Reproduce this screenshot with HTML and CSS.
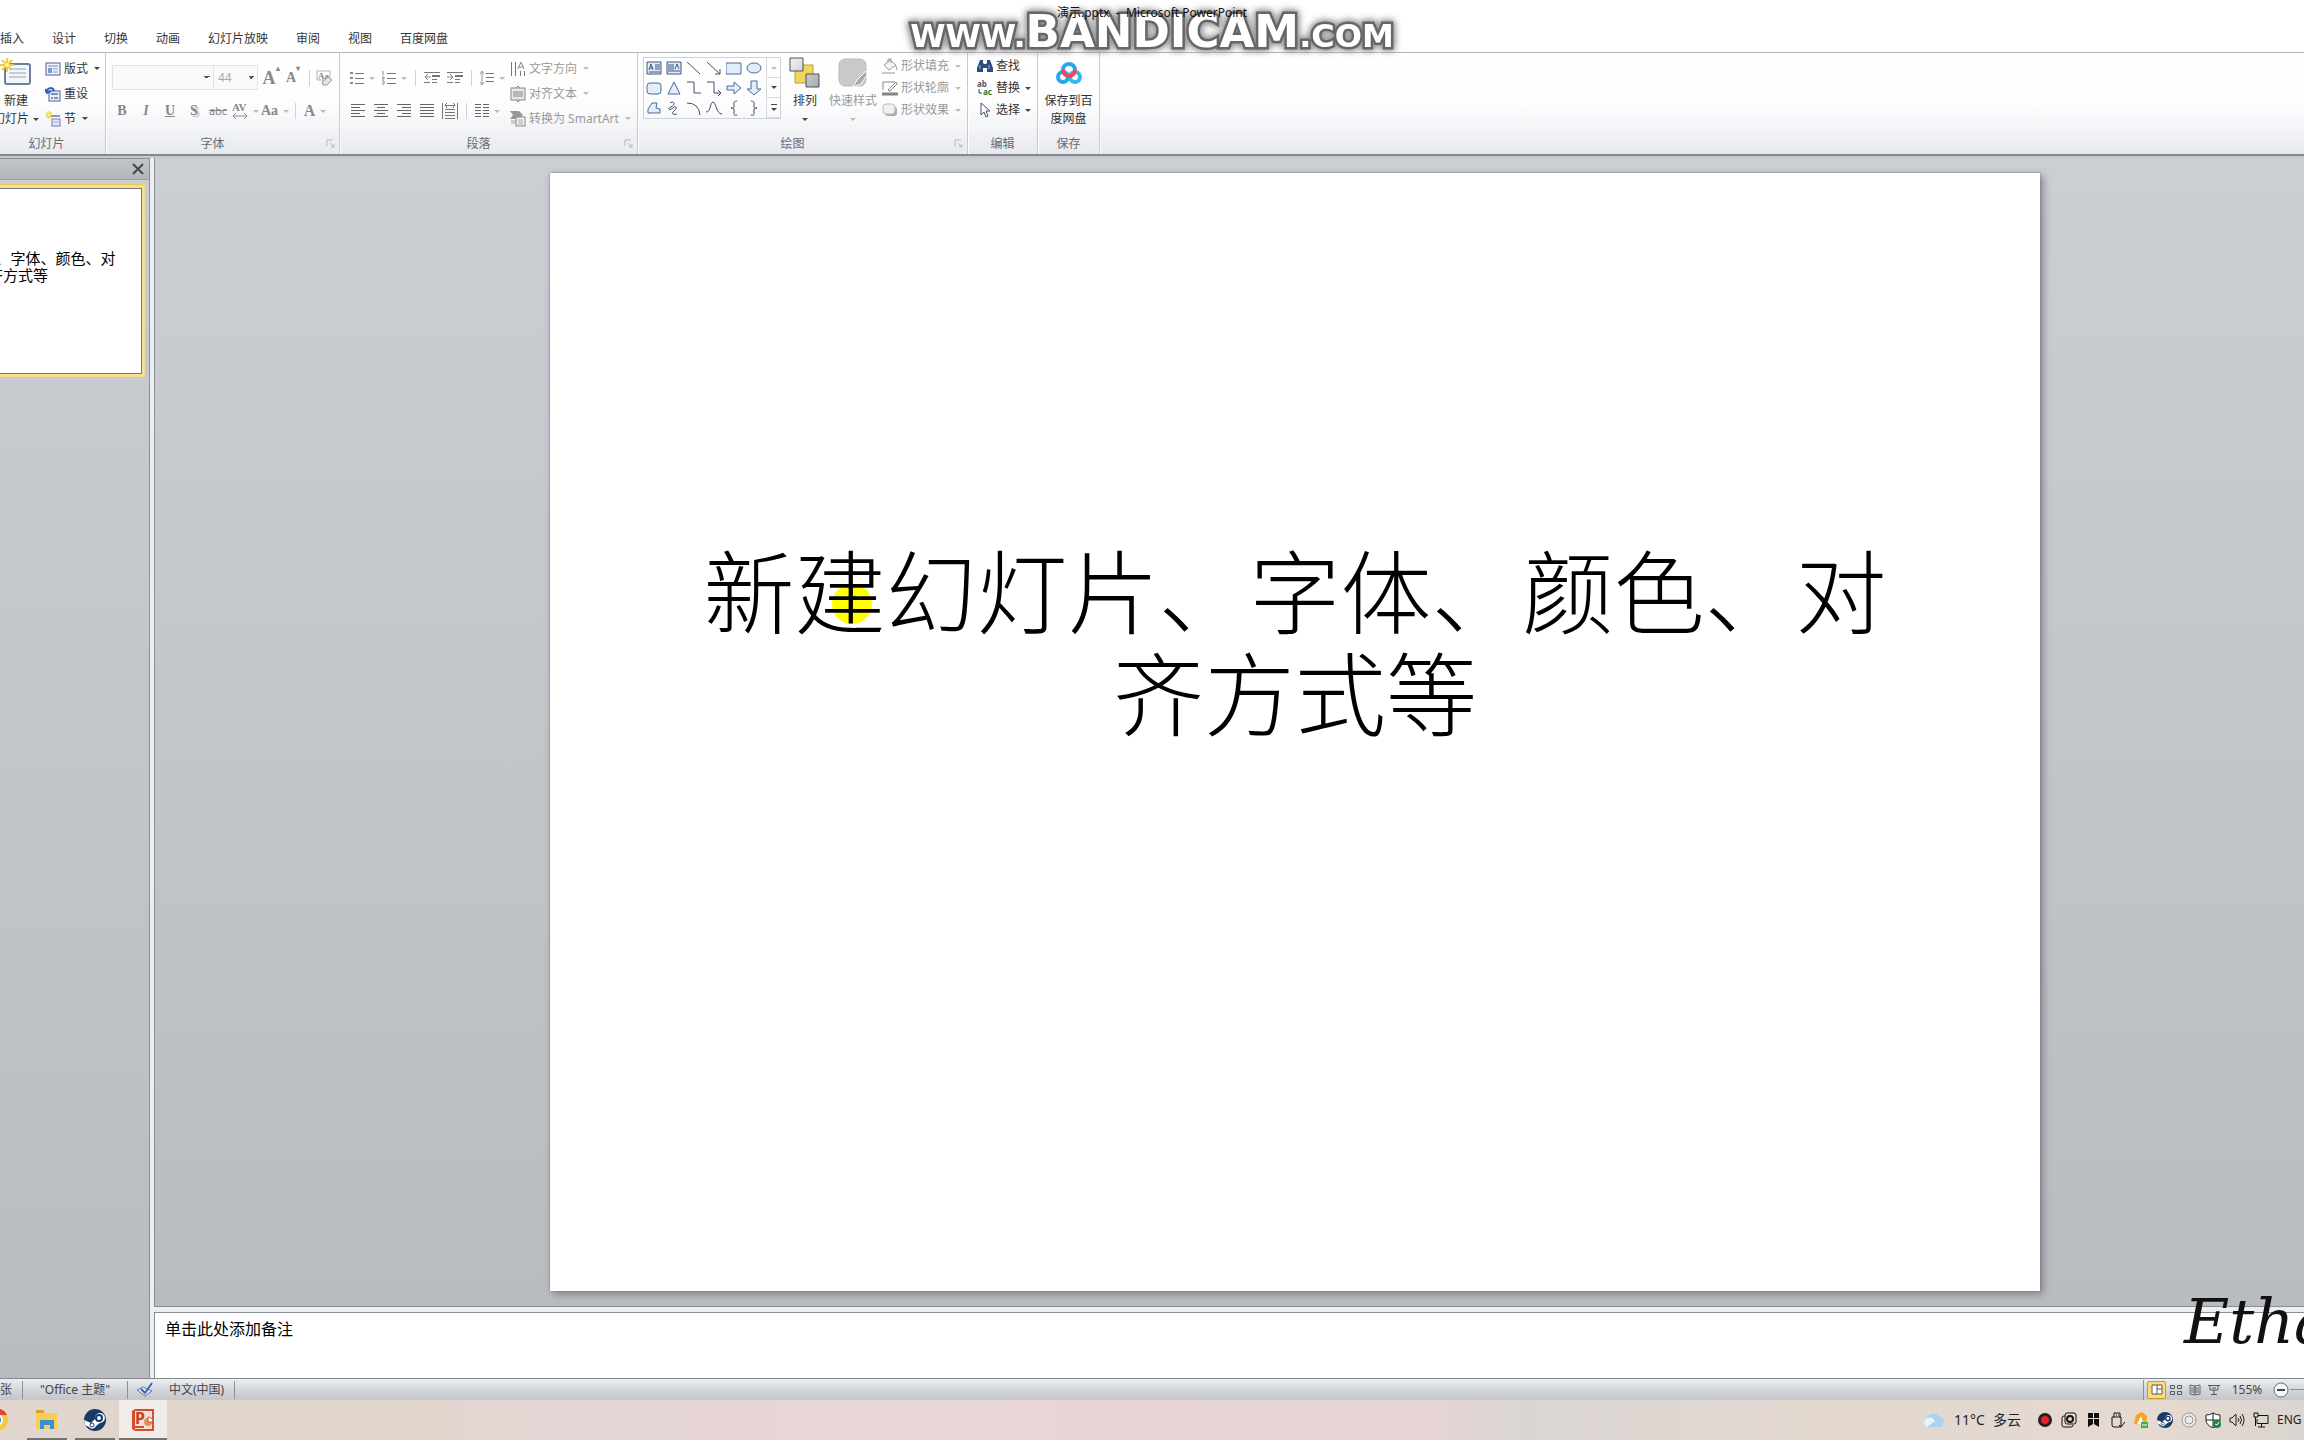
FILE: index.html
```html
<!DOCTYPE html>
<html lang="zh-CN">
<head>
<meta charset="utf-8">
<title>演示.pptx - Microsoft PowerPoint</title>
<link rel="stylesheet" href="styles.css">
</head>
<body>
<svg class="defs" aria-hidden="true">
  <defs>
    <symbol id="spark" viewBox="0 0 14 14"><path d="M7 0v14M0 7h14M2 2l10 10M12 2L2 12" stroke="#f2cf3a" stroke-width="2"/><circle cx="7" cy="7" r="2" fill="#fff6b0"/></symbol>
    <symbol id="steam" viewBox="0 0 22 22"><circle cx="11" cy="11" r="11" fill="#173a66"/><path d="M0 11l7 3 4-4a5 5 0 1 1 5 4l-4 3a4 4 0 0 1-7 1l-4-2z" fill="#fff"/><circle cx="15" cy="9" r="3" fill="#fff" stroke="#173a66" stroke-width="2"/><circle cx="8" cy="16" r="2" fill="none" stroke="#173a66"/></symbol>
    <symbol id="launch" viewBox="0 0 9 9"><path d="M1 7V1h6M4 4l4 4M8 5v3H5" fill="none" stroke="#b4b7bb"/></symbol>
    <linearGradient id="metal" x2="1" y2="1"><stop stop-color="#f4f4f5"/><stop offset="1" stop-color="#a6a9af"/></linearGradient>
  </defs>
</svg>

<header class="titlebar">
  <h1 class="window-title">演示.pptx&nbsp; -&nbsp; Microsoft PowerPoint</h1>
</header>
<nav class="tabs">
  <button>插入</button><button>设计</button><button>切换</button><button>动画</button><button>幻灯片放映</button><button>审阅</button><button>视图</button><button>百度网盘</button>
</nav>

<section class="ribbon">
  <div class="group slides">
    <div class="group-body">
      <button class="big">
        <svg width="32" height="30" viewBox="0 0 32 30"><rect x="5" y="6" width="25" height="20" rx="2" fill="#f3f6fb" stroke="#6d7f9e" stroke-width="2"/><path d="M9 11h17M9 15h17M9 19h17" stroke="#c3cbd9" stroke-width="2"/><use href="#spark" x="0" y="0" width="14" height="14"/></svg>
        <span>新建</span><span>幻灯片 <i class="arrow"></i></span>
      </button>
      <div class="stack">
        <button class="small"><svg width="16" height="16"><rect x="1" y="2" width="14" height="12" fill="#eef3fb" stroke="#4d6388"/><path d="M3 5h10" stroke="#6e8fc4"/><rect x="3" y="7" width="4" height="5" fill="#7d9ccd"/><path d="M8 8h5M8 11h5" stroke="#8aa0c5"/></svg>版式<i class="arrow"></i></button>
        <button class="small"><svg width="16" height="16"><rect x="4" y="5" width="11" height="10" fill="#eef3fb" stroke="#4d6388"/><path d="M6 8h7" stroke="#6e8fc4" stroke-width="2"/><path d="M6 12h2M9 12h4" stroke="#6e8fc4" stroke-width="2"/><path d="M2 6c0-5 6-5 7-1M0 3l2 4 4-2" stroke="#2c5fc0" stroke-width="2" fill="none"/></svg>重设</button>
        <button class="small"><svg width="16" height="16"><path d="M5 5h10" stroke="#8e99ab" stroke-width="2"/><rect x="7" y="8" width="8" height="7" fill="#e4ebf7" stroke="#6b82ab"/><path d="M8 11h6" stroke="#9db1d4"/><use href="#spark" width="8" height="8"/></svg>节<i class="arrow"></i></button>
      </div>
    </div>
    <div class="group-label">幻灯片</div>
  </div>

  <div class="group font">
    <div class="group-body rows">
      <div class="row combos">
        <select class="combo family" aria-label="字体" disabled><option></option></select><select class="combo size" aria-label="字号" disabled><option>44</option></select>
        <button class="tool serif big-a">A<sup>▴</sup></button><button class="tool serif small-a">A<sup>▾</sup></button><span class="sep"></span>
        <button class="tool" aria-label="清除格式"><svg width="18" height="18"><text x="2" y="10" class="aa-text">Aa</text><path d="M1 2h13v9H1z" fill="none" stroke="#b4b4b4"/><path d="M6 13l6-5 4 3-5 5-4 0z" fill="#e4e4e6" stroke="#999"/></svg></button>
      </div>
      <div class="row">
        <button class="tool serif">B</button><button class="tool serif italic">I</button><button class="tool serif under">U</button><button class="tool serif shadow">S</button><button class="tool strike">abc</button>
        <button class="tool wide" aria-label="字符间距"><svg width="16" height="18"><text x="0" y="9" class="av-text">AV</text><path d="M1 14h14M4 11l-3 3 3 3M12 11l3 3-3 3" fill="none" stroke="#909090"/></svg><i class="arrow pale"></i></button>
        <button class="tool wide serif">Aa<i class="arrow pale"></i></button><span class="sep"></span>
        <button class="tool wide serif color">A<i class="arrow pale"></i></button>
      </div>
    </div>
    <div class="group-label">字体<svg class="launcher" width="9" height="9"><use href="#launch"/></svg></div>
  </div>

  <div class="group paragraph">
    <div class="group-body">
      <div class="rows">
        <div class="row">
          <button class="tool wide" aria-label="项目符号"><svg width="14" height="14"><path d="M5 2.5h9M5 7.5h9M5 12.5h9" stroke="#777"/><path d="M0 2h3M0 7h3M0 12h3" stroke="#888" stroke-width="2"/></svg><i class="arrow pale"></i></button>
          <button class="tool wide" aria-label="编号"><svg width="14" height="14"><path d="M5 2.5h9M5 7.5h9M5 12.5h9" stroke="#777"/><path d="M1 0v4M0 6h2v2H0M0 10h2v3H0" stroke="#888" fill="none"/></svg><i class="arrow pale"></i></button><span class="sep"></span>
          <button class="tool" aria-label="减少缩进"><svg width="16" height="14"><path d="M0 1.5h16M8 8.5h5M0 11.5h6M8 11.5h5" stroke="#777"/><path d="M8 5h8" stroke="#777" stroke-width="2"/><path d="M7 6H1M4 3L1 6l3 3" stroke="#888" fill="none"/></svg></button>
          <button class="tool" aria-label="增加缩进"><svg width="16" height="14"><path d="M0 1.5h16M8 8.5h5M0 11.5h6M8 11.5h5" stroke="#777"/><path d="M8 5h8" stroke="#777" stroke-width="2"/><path d="M0 6h6M3 3l3 3-3 3" stroke="#888" fill="none"/></svg></button><span class="sep"></span>
          <button class="tool wide" aria-label="行距"><svg width="14" height="16"><path d="M6 3.5h8M6 7.5h8M6 11.5h8" stroke="#777"/><path d="M2 1v14M0 4l2-3 2 3M0 12l2 3 2-3" stroke="#999" fill="none"/></svg><i class="arrow pale"></i></button>
        </div>
        <div class="row">
          <button class="tool" aria-label="左对齐"><svg width="14" height="13"><path d="M0 .5h14M0 3.5h9M0 6.5h14M0 9.5h9M0 12.5h14" stroke="#666"/></svg></button>
          <button class="tool" aria-label="居中"><svg width="14" height="13"><path d="M0 .5h14M3 3.5h8M0 6.5h14M3 9.5h8M0 12.5h14" stroke="#666"/></svg></button>
          <button class="tool" aria-label="右对齐"><svg width="14" height="13"><path d="M0 .5h14M5 3.5h9M0 6.5h14M5 9.5h9M0 12.5h14" stroke="#666"/></svg></button>
          <button class="tool" aria-label="两端对齐"><svg width="14" height="13"><path d="M0 .5h14M0 3.5h14M0 6.5h14M0 9.5h14M0 12.5h14" stroke="#666"/></svg></button>
          <button class="tool" aria-label="分散对齐"><svg width="16" height="16"><path d="M.5 0v16M15.5 0v16M3 6.5h10M3 9.5h10M3 12.5h10M3 15.5h10M3 2.5h10M5 0L3 2l2 3M11 0l2 2-2 3" fill="none" stroke="#777"/></svg></button><span class="sep"></span>
          <button class="tool wide" aria-label="分栏"><svg width="14" height="13"><path d="M0 .5h6M0 3.5h6M0 6.5h6M0 9.5h6M0 12.5h6M8 .5h6M8 3.5h6M8 6.5h6M8 9.5h6M8 12.5h6" stroke="#666"/></svg><i class="arrow pale"></i></button>
        </div>
      </div>
      <div class="stack dim">
        <button class="small"><svg width="16" height="16"><path d="M1.5 1v14M5.5 1v14M10.5 10v5M14.5 10v5" stroke="#777"/><path d="M8 8l3-7 3 7M9 6h4" fill="none" stroke="#888"/></svg>文字方向<i class="arrow pale"></i></button>
        <button class="small"><svg width="16" height="16"><rect x="1" y="2" width="14" height="12" fill="#e8e8e8" stroke="#888"/><path d="M3 6h10M3 8h10M3 10h10M6 2l2-2 2 2M6 14l2 2 2-2" stroke="#888" fill="none"/></svg>对齐文本<i class="arrow pale"></i></button>
        <button class="small"><svg width="16" height="16"><path d="M0 0h9l4 4-3 4H0l3-4z" fill="#999"/><path d="M1 9h6v4H1z" fill="#ccc"/><rect x="6" y="6" width="9" height="9" fill="#f4f4f4" stroke="#888"/><path d="M8 9h5M8 11h5M8 13h5" stroke="#aaa"/></svg>转换为 SmartArt<i class="arrow pale"></i></button>
      </div>
    </div>
    <div class="group-label">段落<svg class="launcher" width="9" height="9"><use href="#launch"/></svg></div>
  </div>

  <div class="group drawing">
    <div class="group-body">
      <div class="gallery">
        <div class="shapes">
          <svg viewBox="0 0 16 16"><path d="M1 2h14v12H1z" fill="#dfeaf8" stroke="#3b5780"/><path d="M3 10l2-6 2 6M4 8h3M9 5h5M9 7h5M9 9h5M3 12h11" fill="none" stroke="#3b5780"/></svg>
          <svg viewBox="0 0 16 16"><path d="M1 2h14v12H1z" fill="#dfeaf8" stroke="#3b5780"/><path d="M3 4v8M5 4v8M7 4v8M9 10v2M11 10v2M9 9l2-5 2 5M13 10v2" fill="none" stroke="#3b5780"/></svg>
          <svg viewBox="0 0 16 16"><path d="M1 2l13 12"/></svg>
          <svg viewBox="0 0 16 16"><path d="M1 2l13 12M14 9v5H9"/></svg>
          <svg viewBox="0 0 16 16"><path class="fill" d="M0 3h15v11H0z"/></svg>
          <svg viewBox="0 0 16 16"><ellipse class="fill" cx="8" cy="8" rx="7" ry="5"/></svg>
          <svg viewBox="0 0 16 16"><rect class="fill" x="1" y="3" width="14" height="11" rx="3"/></svg>
          <svg viewBox="0 0 16 16"><path class="fill" d="M8 2l6 12H2z"/></svg>
          <svg viewBox="0 0 16 16"><path d="M1 2h7v11h7"/></svg>
          <svg viewBox="0 0 16 16"><path d="M1 2h7v11h7M12 10l3 3-3 3"/></svg>
          <svg viewBox="0 0 16 16"><path class="fill" d="M1 6h7V2l7 6-7 6v-4H1z"/></svg>
          <svg viewBox="0 0 16 16"><path class="fill" d="M5 1h6v8h4l-7 6-7-6h4z"/></svg>
          <svg viewBox="0 0 16 16"><path class="fill" d="M2 13V9l4-6h5l-1 5 4 1v4z"/></svg>
          <svg viewBox="0 0 16 16"><path d="M4 3c4-3 6 2 1 4s-1 4 2 1 5 0 1 3 0 4 3 3"/></svg>
          <svg viewBox="0 0 16 16"><path d="M1 3q12 0 13 12"/></svg>
          <svg viewBox="0 0 16 16"><path d="M0 12C5 12 4 2 7 2s3 12 9 12"/></svg>
          <svg viewBox="0 0 16 16"><path d="M11 1q-4 0-3 4t-3 3q4 0 3 4t3 3"/></svg>
          <svg viewBox="0 0 16 16"><path d="M5 1q4 0 3 4t3 3q-4 0-3 4t-3 3"/></svg>
        </div>
        <div class="scroll"><button aria-label="上"><i class="arrow up pale"></i></button><button aria-label="下"><i class="arrow"></i></button><button aria-label="其他"><span class="more"><i class="arrow"></i></span></button></div>
      </div>
      <button class="big"><svg width="32" height="32"><path d="M6 8h18v18H6z" fill="#f3d65d" stroke="#b79b3c"/><path d="M1 1h13v13H1zM17 17h13v13H17z" fill="url(#metal)" stroke="#4c5058"/></svg><span>排列</span><span><i class="arrow"></i></span></button>
      <button class="big dim"><svg width="32" height="32"><rect x="2" y="2" width="27" height="27" rx="6" fill="#c9c9ca" stroke="#b9b9ba"/><path d="M29 14l-9 9-4 7 8-3 6-9z" fill="#aaa" stroke="#fff"/></svg><span>快速样式</span><span><i class="arrow pale"></i></span></button>
      <div class="stack dim dense">
        <button class="small"><svg width="16" height="16"><path d="M2 7l6-5 6 5-7 5z" fill="#f3f3f3" stroke="#999"/><path d="M6 5V1h3v4M14 8l1 4" stroke="#999" fill="none"/><path d="M0 15h13" stroke="#c8c8c8" stroke-width="2"/></svg>形状填充<i class="arrow pale"></i></button>
        <button class="small"><svg width="16" height="16"><path d="M1 10V2h12M6 10l8-8 1 2-7 7z" fill="none" stroke="#888"/><path d="M0 14h16" stroke="#858585" stroke-width="3"/></svg>形状轮廓<i class="arrow pale"></i></button>
        <button class="small"><svg width="16" height="16"><rect x="3" y="5" width="12" height="9" rx="3" fill="#aaa"/><rect x="1" y="2" width="12" height="10" rx="3" fill="#f0f0f0" stroke="#bbb"/></svg>形状效果<i class="arrow pale"></i></button>
      </div>
    </div>
    <div class="group-label">绘图<svg class="launcher" width="9" height="9"><use href="#launch"/></svg></div>
  </div>

  <div class="group editing">
    <div class="group-body">
      <div class="stack dense">
        <button class="small"><svg width="16" height="16"><path d="M3 2h3v3l1 1h2l1-1V2h3l3 8v4h-6v-4H6v4H0v-4z" fill="#2e4a80"/><path d="M3 7v4M12 7v4" stroke="#9db7e2"/></svg>查找</button>
        <button class="small"><svg width="16" height="16"><text x="0" y="7" class="ab">ab</text><text x="6" y="15" class="ac">ac</text><path d="M2 9v4h3" fill="none" stroke="#345"/></svg>替换<i class="arrow"></i></button>
        <button class="small"><svg width="16" height="16"><path d="M4 1v12l3-3 2 5 2-1-2-5h4z" fill="#fff" stroke="#41506e"/></svg>选择<i class="arrow"></i></button>
      </div>
    </div>
    <div class="group-label">编辑</div>
  </div>

  <div class="group saving">
    <div class="group-body">
      <button class="big"><svg width="28" height="28"><g fill="none" stroke-width="4"><circle cx="8" cy="17" r="5" stroke="#27a8ee"/><circle cx="20" cy="17" r="5" stroke="#35b8f0"/><path d="M8 10a6 6 0 0 1 12 0" stroke="#27a8ee"/><path d="M8 10a6 6 0 0 0 12 0" stroke="#ee4a5e"/></g></svg><span>保存到百</span><span>度网盘</span></button>
    </div>
    <div class="group-label">保存</div>
  </div>
</section>

<main class="workspace">
  <aside class="outline">
    <div class="outline-head"><button class="close" aria-label="关闭"><svg width="12" height="12"><path d="M1 1l10 10M11 1L1 11" stroke="#45484c" stroke-width="2"/></svg></button></div>
    <div class="thumb"><p>新建幻灯片、字体、颜色、对<br>齐方式等</p></div>
  </aside>
  <div class="editor">
    <div class="canvas">
      <article class="slide">
        <h2 class="slide-title">新<span class="pointed">建<span class="spot"><svg width="10" height="18"><path d="M1 1q4 0 4 3v10q0 3-4 3M9 1q-4 0-4 3v10q0 3 4 3" fill="none" stroke="#fff" stroke-width="2"/><path d="M1 1q4 0 4 3v10q0 3-4 3M9 1q-4 0-4 3v10q0 3 4 3" fill="none" stroke="#555"/></svg></span></span>幻灯片、字体、颜色、对<br>齐方式等</h2>
      </article>
    </div>
    <div class="notes">单击此处添加备注</div>
  </div>
</main>

<footer class="status">
  <span class="cell count">张</span><span class="cell theme">"Office 主题"</span>
  <span class="cell language"><svg width="18" height="16"><path d="M1 8l6-3 9 4-7 5z" fill="#dfe8f8" stroke="#6178a6"/><path d="M5 7l4 4 7-10" fill="none" stroke="#3c64b4" stroke-width="2"/></svg>中文(中国)</span>
  <div class="views">
    <button class="view active" aria-label="普通"><svg width="12" height="12"><path d="M1 1h10v9H1zM6 1v9M6 5h5" fill="#fff" stroke="#55585e"/></svg></button>
    <button class="view" aria-label="浏览"><svg width="12" height="12"><path d="M.5 1.5h4v3h-4zM7.500 1.500h4v3h-4zM.5 7.500h4v3h-4zM7.500 7.500h4v3h-4z" fill="none" stroke="#55595f"/></svg></button>
    <button class="view" aria-label="阅读"><svg width="12" height="12"><path d="M1 1l5 1v9l-5-1zM11 1L6 2v9l5-1zM2 4h3M2 6h3M2 8h3M7 4h3M7 6h3M7 8h3" fill="none" stroke="#666a70"/></svg></button>
    <button class="view" aria-label="放映"><svg width="12" height="12"><path d="M0 1.500h12M2 2v4h8V2M6 6v4M3 10.500h6M4 4h4" fill="none" stroke="#55595f"/></svg></button>
    <span class="zoom">155%</span>
    <button class="view" aria-label="缩小"><svg width="16" height="16"><circle cx="8" cy="8" r="7" fill="#f6f7f8" stroke="#6b6f75"/><path d="M4 8h8" stroke="#44474c" stroke-width="2"/></svg></button>
    <span class="track"></span>
  </div>
</footer>

<footer class="taskbar">
  <div class="apps">
    <button class="app chrome" aria-label="Chrome"><svg width="24" height="24"><circle cx="12" cy="12" r="11" fill="#f7c930"/><path d="M2 7a11 11 0 0 1 20 0z" fill="#dc4535"/><circle cx="12" cy="12" r="6" fill="#fff"/><circle cx="12" cy="12" r="4" fill="#3c7de0"/></svg></button>
    <button class="app open" aria-label="文件资源管理器"><svg width="24" height="22"><path d="M1 2h8l2 2h11v16H1z" fill="#f6cd55"/><path d="M1 1h8v3H1z" fill="#dca029"/><path d="M5 20v-9h14v9h-4v-4H9v4z" fill="#3b8fd4"/></svg></button>
    <button class="app open" aria-label="Steam"><svg width="24" height="24"><use href="#steam" x="1" y="1" width="22" height="22"/></svg></button>
    <button class="app open current" aria-label="PowerPoint"><svg width="24" height="24"><path d="M1 3l3-2h19v22H4l-3-2z" fill="#d1502c"/><path d="M4 3h17v18H4z" fill="#f7dfd0"/><circle cx="17" cy="14" r="4" fill="#e88d64"/><path d="M17 14v-5a5 5 0 0 1 5 5z" fill="#fff" stroke="#d1502c"/><path d="M4 18h9v2H4z" fill="#d1502c"/><text x="4" y="16" class="ppt">P</text></svg></button>
  </div>
  <div class="tray">
    <svg class="weather" width="24" height="16"><path d="M5 15a5 5 0 0 1 0-9 7 7 0 0 1 12-2 6 6 0 0 1 2 11z" fill="#a9d3f0"/><path d="M5 15a5 5 0 0 1 0-9 6 6 0 0 1 8 3z" fill="#e9f5fd"/></svg>
    <span class="temp">11°C</span><span class="sky">多云</span>
    <svg width="16" height="16"><circle cx="8" cy="8" r="7" fill="#222"/><circle cx="8" cy="8" r="4" fill="#e8202a"/></svg>
    <svg width="16" height="16"><path d="M4 4h-1q-2 0-2 2v7q0 2 2 2h7q2 0 2-2M6 1h7q2 0 2 2v7q0 2-2 2H6q-2 0-2-2V3q0-2 2-2z" fill="none" stroke="#111"/><circle cx="9" cy="7" r="3" fill="none" stroke="#111" stroke-width="2"/></svg>
    <svg width="16" height="16"><path d="M3 1h5v5H3zM9 1h5v5H9zM3 7h5v5l-5 3zM9 7h5v8l-5-3z" fill="#111"/></svg>
    <svg width="16" height="16"><path d="M5 5V1h6v4M3 5h9v10H5q-2 0-2-2zM7 3h1M9 3h1M10 13l2 2 4-5" fill="none" stroke="#111"/></svg>
    <svg width="16" height="16"><path d="M1 12L3 3l6-3 5 4-1 9z" fill="#f6a321"/><path d="M4 12l4-8 3 9z" fill="#fff"/><path d="M8 10h7v6H8z" fill="#39b54a"/><path d="M9 13h5" stroke="#fff"/></svg>
    <svg width="16" height="16"><use href="#steam"/></svg>
    <svg width="16" height="16"><circle cx="8" cy="8" r="7" fill="#ecebea" stroke="#99979a"/><circle cx="8" cy="8" r="4" fill="none" stroke="#99979a"/></svg>
    <svg width="16" height="16"><path d="M8 1q3 2 7 2v5q0 5-7 8-7-3-7-8V3q4 0 7-2z" fill="#fff" stroke="#222"/><path d="M8 1v14M1 8h14" stroke="#222"/><circle cx="12" cy="12" r="4" fill="#10893e"/><path d="M10 12l2 1 2-3" stroke="#fff" fill="none"/></svg>
    <svg width="16" height="16"><path d="M1 6h2l4-4v12l-4-4H1zM9 6q2 2 0 4M11 4q3 4 0 8M13 2q4 6 0 12" fill="none" stroke="#222"/></svg>
    <svg width="16" height="16"><path d="M5 3.500h10v8H4V7M8.500 11v4M5 15h7M1 1h4v4H1zM2.500 5v9" fill="none" stroke="#111"/></svg>
    <span class="ime">ENG</span>
  </div>
</footer>

<div class="bandicam"><span>www.</span><b>BANDICAM</b><span>.com</span></div>
<div class="signature">Ethan</div>
</body>
</html>
```
FILE: styles.css
```css
* { box-sizing: border-box; }
body {
  margin: 0; min-height: 100vh; display: flex; flex-direction: column;
  position: relative; overflow: hidden; background: #fff; color: #333;
  font: 12px/18px "Noto Sans", "Noto Sans CJK SC", sans-serif;
}
button { border: 0; padding: 0; background: none; color: inherit; font: inherit; white-space: nowrap; }
svg { flex: none; display: block; }
.defs { position: absolute; width: 0; height: 0; }

.titlebar { height: 26px; padding-top: 4px; position: relative; z-index: 2; }
.window-title { margin: 0; text-align: center; font: 12px/18px "Noto Sans", "Noto Sans CJK SC", sans-serif; color: #111; }
.tabs { height: 27px; display: flex; gap: 28px; align-items: center; border-bottom: 1px solid #b3b6bb; }

/* Ribbon */
.ribbon { display: flex; height: 103px; background: linear-gradient(#fff 0, #fdfdfe 50%, #f3f4f7 76%, #e6e9ed 100%); border-bottom: 2px solid #85888d; }
.group { display: flex; flex-direction: column; flex: none; border-right: 1px solid #c6c9ce; box-shadow: 1px 0 #fff; }
.group-body { display: flex; height: 81px; }
.group-label { display: flex; justify-content: center; align-items: center; height: 20px; color: #666a72; position: relative; }
.launcher { position: absolute; right: 4px; top: 5px; }
.slides { width: 118px; margin-left: -12px; }
.font { width: 234px; }
.paragraph { width: 298px; }
.drawing { width: 330px; }
.editing { width: 70px; }
.saving { width: 62px; }
.font .group-label, .paragraph .group-label, .drawing .group-label { padding-right: 20px; }

.arrow { display: inline-block; flex: none; border: solid transparent; border-width: 3px 3px 0; border-top-color: #444; }
.arrow.pale { border-top-color: #bbb; }
.arrow.up { transform: rotate(180deg); }
.more { display: grid; padding-top: 3px; border-top: 1px solid #444; }
.big { display: flex; flex-direction: column; align-items: center; flex: none; padding-top: 4px; }
.big svg { margin-bottom: 3px; height: 32px; }
.big span { height: 18px; display: flex; align-items: center; gap: 4px; }
.stack { display: flex; flex-direction: column; padding-top: 3px; }
.small { display: flex; align-items: center; gap: 3px; height: 25px; }
.dense { padding-top: 2px; }
.dense .small { height: 22px; }
.small .arrow { margin-left: 3px; }
.dim { color: #999; }
.slides .big { width: 50px; margin-left: 3px; }
.slides .stack { padding-left: 4px; }

.rows { display: flex; flex-direction: column; gap: 8px; padding: 12px 0 0 4px; }
.paragraph .rows { padding-left: 6px; width: 170px; }
.row { display: flex; height: 25px; align-items: center; }
.tool { width: 24px; height: 25px; display: flex; align-items: center; justify-content: center; color: #888; flex: none; }
.combos .tool { width: 22px; }
.paragraph .tool { width: 23px; }
.row .wide { width: 30px; gap: 5px; }
.row .tool.wide .arrow { margin-top: 1px; }
.paragraph .row .wide { width: 32px; }
.sep { width: 10px; height: 16px; flex: none; background: linear-gradient(#d0d2d5, #d0d2d5) center / 1px 100% no-repeat; }
.serif { font: bold 14px/18px "Liberation Serif", serif; }
.big-a { font-size: 18px; }
.small-a { font-size: 14px; }
.serif sup { font-size: 8px; line-height: 8px; align-self: flex-start; }
.italic { font-style: italic; }
.under { text-decoration: underline; }
.shadow { text-shadow: 2px 2px 1px #bbb; }
.strike { text-decoration: line-through; font-size: 11px; }
.color { font-size: 16px; }
.aa-text, .av-text { font: bold 9px "Liberation Serif", serif; fill: #888; }
.av-text { font-size: 11px; }
.combo { appearance: none; height: 25px; margin: 0; padding: 0 4px; border: 1px solid #e2e3e5; border-radius: 0; opacity: 1; color: #aaa; font: inherit;
  background: linear-gradient(135deg, #555 50%, transparent 50%) right 3px center / 3px 3px no-repeat, linear-gradient(225deg, #555 50%, transparent 50%) right 6px center / 3px 3px no-repeat, #fafafa; }
.combos .family { width: 102px; margin-left: 2px; }
.combos .size { width: 44px; margin-right: 2px; border-left: 0; }

.gallery { display: flex; width: 138px; height: 62px; margin: 4px 0 0 5px; border: 1px solid #cdd2da; flex: none; }
.shapes { display: grid; grid-template-columns: repeat(6, 20px); grid-template-rows: repeat(3, 20px); flex: 1; place-items: center; }
.shapes svg { width: 16px; height: 16px; fill: none; stroke: #40506c; }
.shapes .fill { fill: #e3edf9; stroke: #4a6a9a; }
.scroll { width: 14px; display: flex; flex-direction: column; border-left: 1px solid #d7dae0; }
.scroll button { flex: 1; display: flex; align-items: center; justify-content: center; border-bottom: 1px solid #d7dae0; }
.drawing .big { width: 48px; }
.drawing .stack { padding-left: 5px; }
.editing .stack { padding-left: 9px; }
.editing .small .arrow { margin-left: 2px; }
.saving .big { width: 100%; padding-top: 7px; }
.saving .big svg { height: 29px; }
.ab, .ac { font: bold 8px "Noto Sans", sans-serif; fill: #556; }
.ac { fill: #2d7a3a; }

/* Workspace */
.workspace { flex: 1; display: flex; border-top: 2px solid #c3c6ca; }
.outline { width: 150px; flex: none; background: linear-gradient(#caced3, #b9bcbf); border-right: 1px solid #8a8d92; overflow: hidden; }
.outline-head { display: flex; justify-content: flex-end; align-items: center; height: 22px; padding-right: 5px; background: linear-gradient(#c1c4c8, #b3b7bc); border-top: 1px solid #8f9296; border-bottom: 1px solid #999ca1; }
.thumb { margin: 4px 3px 0 -110px; height: 194px; padding-top: 61px; border: 4px solid #f7e08c; outline: 1px solid #e9c95a; outline-offset: -1px; background: #fff; box-shadow: inset 0 0 0 1px #77777b; color: #000; text-align: center; }
.thumb p { margin: 0; font: 15px/17px "Noto Sans CJK SC", sans-serif; white-space: nowrap; }
.editor { flex: 1; min-width: 0; display: flex; flex-direction: column; background: #eceef1; border-left: 4px solid #eceef1; }
.canvas { flex: 1; padding: 15px 264px 15px 395px; background: linear-gradient(#cbcfd4, #b9bcbf); border: solid #8a8d92; border-width: 0 0 1px 1px; }
.slide { aspect-ratio: 4 / 3; background: #fff; box-shadow: 0 0 2px #777, 3px 3px 8px #80838a; padding-top: 363px; }
.slide-title { margin: 0; color: #000; text-align: center; font: 91px/102px "Noto Sans CJK SC", sans-serif; font-weight: 300; }
.pointed { position: relative; z-index: 0; }
.spot { position: absolute; left: 38px; top: 63px; z-index: -1; width: 40px; height: 40px; border-radius: 50%; background: #ff0; display: grid; place-items: center; }
.notes { height: 66px; margin-top: 5px; padding: 6px 10px; background: #fff; border: solid #8a8d92; border-width: 1px 0 0 1px; color: #000; font-size: 16px; line-height: 20px; }

/* Status bar */
.status { display: flex; height: 22px; align-items: center; background: linear-gradient(#eceef0, #d0d3d7 60%, #c2c6ca); border-top: 1px solid #85888d; color: #444; }
.cell { display: flex; align-items: center; height: 18px; border-right: 1px solid #8d9095; white-space: nowrap; }
.count { width: 23px; justify-content: flex-end; padding-right: 10px; }
.theme { width: 105px; justify-content: center; }
.language { width: 107px; gap: 15px; padding-left: 8px; }
.views { margin-left: auto; display: flex; align-items: center; height: 20px; padding-left: 3px; border-left: 1px solid #8d9095; }
.view { width: 19px; height: 18px; display: grid; place-items: center; }
.view.active { background: #fbdc78; border: 1px solid #c79a35; border-radius: 2px; }
.zoom { width: 48px; text-align: center; }
.track { width: 14px; height: 1px; background: #8d9095; }

/* Taskbar */
.taskbar { display: flex; justify-content: space-between; height: 40px; background: linear-gradient(90deg, #e1d6ce 0, #e0d6cb 17%, #e6d5d6 24%, #e9d5d8 45%, #e6d4d5 62%, #dad5d3 66%, #e2d8d0 78%, #e5d9d0 94%, #dad5d0 100%); color: #222; }
.apps { display: flex; }
.app { width: 48px; height: 40px; display: grid; place-items: center; }
.chrome { margin-left: -27px; margin-right: 2px; }
.apps .open { background: linear-gradient(#77706c, #77706c) center bottom / 40px 2px no-repeat; }
.apps .current { background: linear-gradient(#77706c, #77706c) center bottom / 48px 2px no-repeat, #f2ece8; }
.tray { display: flex; align-items: center; gap: 8px; }
.temp { width: 31px; font-size: 14px; }
.sky { width: 36px; font-size: 14px; }
.ime { width: 27px; }
.ppt { font: bold 16px "Noto Sans", sans-serif; fill: #c5401e; }

/* Overlays */
.bandicam { position: absolute; top: 10px; left: 0; right: 0; display: flex; justify-content: center; align-items: baseline; color: #fff; text-transform: uppercase;
  font: bold 32px/44px "DejaVu Sans", sans-serif; -webkit-text-stroke: 5px #666; paint-order: stroke fill; filter: drop-shadow(0 0 3px #999) drop-shadow(0 0 3px #999); }
.bandicam b { font-size: 45px; }
.signature { position: absolute; left: calc(100% - 120px); top: 1286px; color: #111; font: italic 62px/72px "DejaVu Serif", serif; }
```
